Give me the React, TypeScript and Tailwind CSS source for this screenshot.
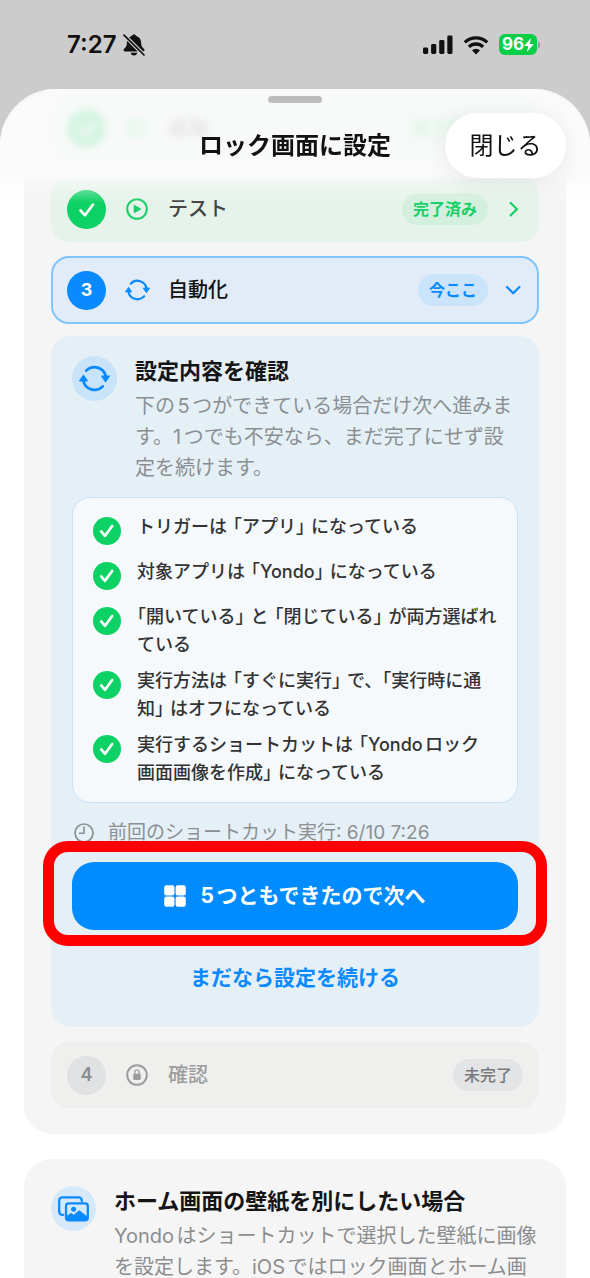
import { useState } from 'react';
import type { ReactNode } from 'react';

function CheckCircle({ className }: { className: string }) {
    return (
        <svg viewBox="0 0 28 28" className={className} fill="none" aria-hidden="true">
            <circle cx="14" cy="14" r="14" fill="#0cd164" />
            <path d="M8.2 14.4 12 18.8 19.2 9" stroke="#fff" strokeWidth="2.7" strokeLinecap="round" strokeLinejoin="round" />
        </svg>
    );
}

function StepCheck() {
    return (
        <svg viewBox="0 0 39 39" className="w-[39px] h-[39px] shrink-0" fill="none" aria-hidden="true">
            <circle cx="19.5" cy="19.5" r="19.5" fill="#0cd164" />
            <path d="M13.5 20.5 18 25.3 26 14.5" stroke="#fff" strokeWidth="2.6" strokeLinecap="round" strokeLinejoin="round" />
        </svg>
    );
}

function CycleIcon({ className }: { className: string }) {
    return (
        <svg viewBox="0 0 32 28" className={className} fill="none" aria-hidden="true">
            <path d="M7.4 5.9A11.8 11.8 0 0 1 27.6 12" stroke="currentColor" strokeWidth="2.8" strokeLinecap="round" />
            <path d="M24.6 22.1A11.8 11.8 0 0 1 4.4 16" stroke="currentColor" strokeWidth="2.8" strokeLinecap="round" />
            <path d="M23.4 11.6h8l-4 5.8zM8.600 16.400h-8l4-5.800z" fill="currentColor" stroke="currentColor" strokeWidth="1.200" strokeLinejoin="round" />
        </svg>
    );
}

function PlayIcon() {
    return (
        <svg viewBox="0 0 22 22" className="w-[22px] h-[22px]" fill="none" aria-hidden="true">
            <circle cx="11" cy="11" r="9.8" stroke="currentColor" strokeWidth="2" />
            <path d="M8.2 7.2v7.600l6.600-3.800z" fill="currentColor" stroke="currentColor" strokeWidth="1" strokeLinejoin="round" />
        </svg>
    );
}

function LockIcon() {
    return (
        <svg viewBox="0 0 22 22" className="w-[22px] h-[22px]" fill="none" aria-hidden="true">
            <circle cx="11" cy="11" r="9.8" stroke="currentColor" strokeWidth="2" />
            <rect x="7.2" y="9.8" width="7.6" height="6.2" rx="1.2" fill="currentColor" />
            <path d="M8.9 10V8a2.1 2.1 0 0 1 4.2 0v2" stroke="currentColor" strokeWidth="1.3" />
        </svg>
    );
}

function ClockIcon() {
    return (
        <svg viewBox="0 0 20 20" className="w-5 h-5 shrink-0" fill="none" aria-hidden="true">
            <circle cx="10" cy="10" r="9" stroke="currentColor" strokeWidth="1.7" />
            <path d="M10 4v6.2H5.6" stroke="currentColor" strokeWidth="1.6" strokeLinecap="round" strokeLinejoin="round" />
        </svg>
    );
}

function GridIcon() {
    return (
        <svg viewBox="0 0 22 22" className="w-[22px] h-[22px]" fill="currentColor" aria-hidden="true">
            <rect x="0.2" y="0.2" width="10.2" height="10.2" rx="2.2" />
            <rect x="11.6" y="0.2" width="10.2" height="10.2" rx="2.2" />
            <rect x="0.2" y="11.6" width="10.2" height="10.2" rx="2.2" />
            <rect x="11.6" y="11.6" width="10.2" height="10.2" rx="2.2" />
        </svg>
    );
}

function PhotosIcon() {
    return (
        <svg viewBox="0 0 31 26" className="w-[31px] h-[26px]" fill="none" aria-hidden="true">
            <path d="M5.2 18.8H4.2a3 3 0 0 1-3-3V4.4a3 3 0 0 1 3-3h16.600a3 3 0 0 1 3 3v.6" stroke="currentColor" strokeWidth="2.300" strokeLinecap="round" />
            <rect x="8" y="7.4" width="21.800" height="17" rx="2.800" stroke="currentColor" strokeWidth="2.300" />
            <circle cx="15.600" cy="13.200" r="2.500" fill="currentColor" />
            <path d="M9 19.800l3.400-2.600a1 1 0 0 1 1.200 0l2.200 1.600 4.600-4a1.200 1.200 0 0 1 1.600 0l7 5.400V23a1 1 0 0 1-1 1H10a1 1 0 0 1-1-1z" fill="currentColor" />
        </svg>
    );
}

function Chevron({ down = false }: { down?: boolean }) {
    return (
        <svg viewBox="0 0 18 18" className="w-[18px] h-[18px] ml-[17px] shrink-0" fill="none" stroke="currentColor" strokeWidth="2.2" strokeLinecap="round" strokeLinejoin="round" aria-hidden="true">
            <path d={down ? 'M2 6l6.200 6.200L14.400 6' : 'M5.600 3 12 9.200l-6.400 6.200'} />
        </svg>
    );
}

function StatusBar() {
    return (
        <div className="h-[89px] shrink-0 flex items-center justify-between pl-[67px] pr-[50px] text-[#111]">
            <div className="flex items-center gap-[7px]">
                <span className="text-2xl font-semibold">7:27</span>
                <svg viewBox="0 0 22 22" className="w-[22px] h-[22px]" aria-hidden="true">
                    <path d="M11 .4c-1.100 0-2 .7-2.300 1.700C5.600 3 3.900 5.600 3.900 8.800c0 3.200-.9 4.300-2.500 5.700-.6.600-.9 1-.9 1.600 0 .8.600 1.300 1.500 1.300h18c.9 0 1.500-.5 1.500-1.300 0-.6-.3-1-.9-1.600-1.600-1.400-2.500-2.500-2.500-5.700 0-3.200-1.700-5.800-4.800-6.700C13 1.100 12.100.4 11 .4z" fill="currentColor" />
                    <path d="M7.700 18.800h6.600c-.3 1.700-1.600 2.700-3.300 2.700s-3-1-3.300-2.700z" fill="currentColor" />
                    <path d="M1.200 1.200 21 21" stroke="#ccc" strokeWidth="4" />
                    <path d="M1 1.200 21 21" stroke="currentColor" strokeWidth="1.700" strokeLinecap="round" />
                </svg>
            </div>
            <div className="flex items-center">
                <svg viewBox="0 0 30 20" className="w-[30px] h-5" fill="currentColor" aria-hidden="true">
                    <rect x="0" y="12.500" width="5.200" height="6.500" rx="1.400" />
                    <rect x="8.100" y="9" width="5.200" height="10" rx="1.400" />
                    <rect x="16.200" y="5" width="5.200" height="14" rx="1.400" />
                    <rect x="24.300" y="0.500" width="5.200" height="18.500" rx="1.400" />
                </svg>
                <svg viewBox="0 0 26 20" className="w-[26px] h-5 ml-2.5" fill="none" stroke="currentColor" strokeWidth="3.300" aria-hidden="true">
                    <path d="M1.800 7.400a16 16 0 0 1 22.400 0" />
                    <path d="M5.900 11.900a10.200 10.200 0 0 1 14.200 0" />
                    <path d="M13 19.400 9 15.300a5.800 5.800 0 0 1 8 0z" fill="currentColor" stroke="none" />
                </svg>
                <div className="ml-2.5 h-[21px] w-[38px] rounded-[6px] bg-[#08cf45] flex items-center justify-center text-white">
                    <span className="text-[17px] leading-none font-bold">96</span>
                    <svg viewBox="0 0 10 14" className="w-2.5 h-3.5" fill="currentColor" aria-hidden="true">
                        <path d="M7 0 .2 8h4L3 14l6.800-8h-4z" />
                    </svg>
                </div>
                <span className="ml-px h-1.5 w-0.5 rounded-r-full bg-[#9a9a9a]" />
            </div>
        </div>
    );
}

function DoneStep({ title, icon }: { title: string; icon: ReactNode }) {
    return (
        <button type="button" className="w-full h-[66px] px-4 flex items-center rounded-[18px] bg-[#e5f3ea] text-[#18cf68]">
            <StepCheck />
            <span className="w-[26px] ml-[18px] flex justify-center">{icon}</span>
            <span className="ml-[18px] text-xl font-medium text-[#444]">{title}</span>
            <span className="ml-auto h-8 px-[11px] flex items-center rounded-full bg-[#d3efdd] font-semibold">完了済み</span>
            <Chevron />
        </button>
    );
}

// Term in corner brackets, set half-width with a little air on both sides
function Term({ children, first = false }: { children: ReactNode; first?: boolean }) {
    return <span className={first ? "mr-1.5 [font-feature-settings:'halt']" : "mx-1.5 [font-feature-settings:'halt']"}>「{children}」</span>;
}

function CheckItem({ children }: { children: ReactNode }) {
    return (
        <li className="flex gap-4">
            <CheckCircle className="w-7 h-7 mt-1 mb-[5px] shrink-0" />
            <p className="leading-7 whitespace-nowrap">{children}</p>
        </li>
    );
}

export default function App() {
    const [open, setOpen] = useState(true);

    return (
        <div lang="ja" className="h-screen flex flex-col overflow-hidden bg-[#ccc] text-base font-[Inter,'Noto_Sans_CJK_JP',sans-serif] [text-autospace:normal]">
            <StatusBar />

            <main className="relative flex-1 min-h-0 overflow-hidden rounded-t-[56px] bg-white">
                <header className="absolute inset-x-0 top-0 z-10">
                    <div className="bg-[#fafafa]/85 backdrop-blur-[3px] pt-[7px] pb-px">
                        <div className="mx-auto w-[54px] h-[7px] rounded-full bg-[#bdbdbf]" />
                        <div className="mt-2.5 px-6 grid grid-cols-[1fr_auto_1fr] items-center">
                            <h1 className="col-start-2 text-2xl font-bold text-[#111]">ロック画面に設定</h1>
                            <button type="button" className="justify-self-end w-[121px] h-[65px] rounded-full bg-white text-2xl text-[#111] shadow-[0_4px_24px_rgba(0,0,0,0.08)]">
                                閉じる
                            </button>
                        </div>
                    </div>
                    <div className="h-6 bg-linear-to-b from-[#fafafa]/60 to-[#fafafa]/0 pointer-events-none" />
                </header>

                <section className="mx-6 px-[27px] pt-1.5 pb-[26px] rounded-b-[28px] bg-[#f5f5f5]">
                    <DoneStep title="追加" icon={<PlayIcon />} />
                    <div className="mt-[15px]">
                        <DoneStep title="テスト" icon={<PlayIcon />} />
                    </div>

                    <button
                        type="button"
                        aria-expanded={open}
                        onClick={() => setOpen(!open)}
                        className="mt-[14px] w-full h-[68px] px-3.5 flex items-center rounded-[18px] border-2 border-[#80c5fd] bg-[#e1ecf8] text-[#0a8aff]"
                    >
                        <span className="w-[39px] h-[39px] rounded-full bg-[#0a8aff] flex items-center justify-center text-lg font-bold text-white">3</span>
                        <span className="w-[26px] ml-[18px] flex justify-center">
                            <CycleIcon className="w-[25px] h-[22px]" />
                        </span>
                        <span className="ml-[18px] text-xl font-medium text-[#111]">自動化</span>
                        <span className="ml-auto h-8 px-[11px] flex items-center rounded-full bg-[#c9e4fb] font-semibold">今ここ</span>
                        <Chevron down />
                    </button>

                    {open && (
                        <div className="mt-3 px-[21px] pt-5 pb-[15px] rounded-[20px] bg-[#e5eff6]">
                            <div className="flex gap-[18px]">
                                <span className="w-[45px] h-[45px] shrink-0 rounded-full bg-[#c9e3f8] flex items-center justify-center text-[#0a8aff]">
                                    <CycleIcon className="w-[31px] h-[27px]" />
                                </span>
                                <div>
                                    <h2 className="text-[22px] leading-[30px] font-bold text-[#151515]">設定内容を確認</h2>
                                    <p className="mt-[5px] text-xl leading-[31px] whitespace-nowrap text-[#8b8f93]">
                                        下の5つができている場合だけ次へ進みま<br />
                                        す。1つでも不安なら、まだ完了にせず設<br />
                                        定を続けます。
                                    </p>
                                </div>
                            </div>

                            <ul className="mt-[13px] px-5 py-[15px] space-y-2 rounded-[18px] border border-[#c3e1fa] bg-[#f5f9fc] text-lg font-medium text-[#333]">
                                <CheckItem>トリガーは<Term>アプリ</Term>になっている</CheckItem>
                                <CheckItem>対象アプリは<Term>Yondo</Term>になっている</CheckItem>
                                <CheckItem>
                                    <Term first>開いている</Term>と<Term>閉じている</Term>が両方選ばれ<br />
                                    ている
                                </CheckItem>
                                <CheckItem>
                                    実行方法は<Term>すぐに実行</Term>で、<Term first>実行時に通<br />
                                    知</Term>はオフになっている
                                </CheckItem>
                                <CheckItem>
                                    実行するショートカットは<Term>Yondoロック<br />
                                    画面画像を作成</Term>になっている
                                </CheckItem>
                            </ul>

                            <p className="mt-4 px-0.5 flex items-center gap-3.5 text-[19px] leading-[27px] text-[#8b8f93]">
                                <ClockIcon />
                                前回のショートカット実行: 6/10 7:26
                            </p>

                            <div className="relative mt-4">
                                <button type="button" className="w-full h-[68px] rounded-[22px] bg-[#008bff] flex items-center justify-center gap-3.5 text-[21px] font-bold text-white">
                                    <GridIcon />
                                    5つともできたので次へ
                                </button>
                                <div className="absolute -inset-x-[29px] -top-[21px] -bottom-4 rounded-[25px] border-[11px] border-[#fe0000] pointer-events-none" />
                            </div>

                            <button type="button" className="mt-3.5 w-full h-[68px] text-[21px] font-semibold text-[#0a8aff]">
                                まだなら設定を続ける
                            </button>
                        </div>
                    )}

                    <button type="button" disabled className="mt-[15px] w-full h-[66px] px-4 flex items-center rounded-[18px] bg-[#efefed] text-[#9b9d9f]">
                        <span className="w-[39px] h-[39px] rounded-full bg-[#dfe1e3] flex items-center justify-center text-lg font-semibold text-[#8b8d8f]">4</span>
                        <span className="w-[26px] ml-[18px] flex justify-center">
                            <LockIcon />
                        </span>
                        <span className="ml-[18px] text-xl font-medium">確認</span>
                        <span className="ml-auto h-8 px-[11px] flex items-center rounded-full bg-[#e2e4e6] font-medium text-[#77797b]">未完了</span>
                    </button>
                </section>

                <section className="mt-[25px] mx-6 p-[27px] rounded-[28px] bg-[#f5f5f5] flex gap-[18px]">
                    <span className="w-[45px] h-[45px] shrink-0 rounded-full bg-[#d6e9fa] flex items-center justify-center text-[#0a8aff]">
                        <PhotosIcon />
                    </span>
                    <div>
                        <h2 className="text-[22px] leading-[30px] font-bold text-[#151515]">ホーム画面の壁紙を別にしたい場合</h2>
                        <p className="mt-[5px] text-xl leading-[31px] text-[#8b8d8f] whitespace-nowrap">
                            Yondoはショートカットで選択した壁紙に画像<br />
                            を設定します。iOSではロック画面とホーム画
                        </p>
                    </div>
                </section>
            </main>
        </div>
    );
}
